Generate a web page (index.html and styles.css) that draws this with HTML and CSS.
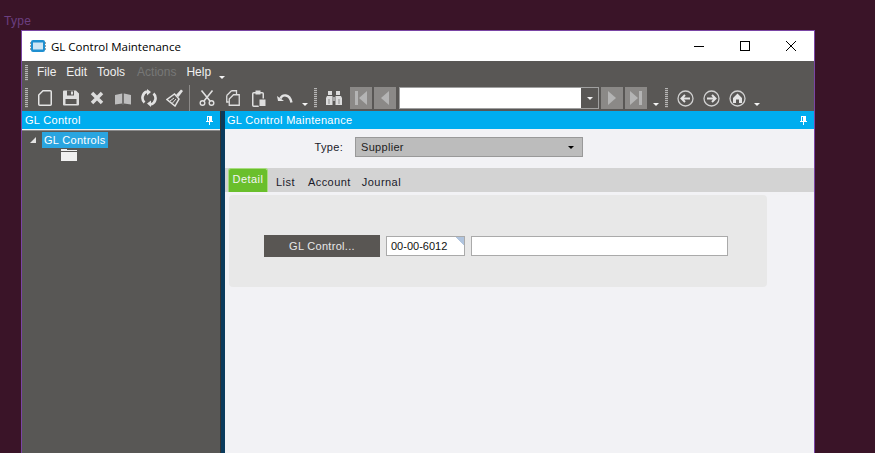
FILE: index.html
```html
<!DOCTYPE html>
<html lang="en">
<head>
<meta charset="utf-8">
<title>GL Control Maintenance</title>
<link rel="stylesheet" href="styles.css">
</head>
<body>
<div class="desk-label">Type</div>
<div class="window">
  <header class="titlebar">
    <svg class="app-icon" width="16" height="14" viewBox="0 0 16 14"><rect x="1" y="1" width="14" height="12" rx="2" fill="#1f8fd0"/><rect x="3" y="3.500" width="10" height="7" fill="#cfe6f5"/><path d="M0 4h1M0 7h1M0 10h1M15 4h1M15 7h1M15 10h1" stroke="#444"/></svg>
    <span class="title">GL Control Maintenance</span>
    <div class="win-controls">
      <svg class="win-btn" width="12" height="12" viewBox="0 0 12 12"><path d="M1 6.500h10" stroke="#000"/></svg>
      <svg class="win-btn" width="12" height="12" viewBox="0 0 12 12"><rect x="1.500" y="1.500" width="9" height="9" fill="none" stroke="#000"/></svg>
      <svg class="win-btn" width="12" height="12" viewBox="0 0 12 12"><path d="M1 1l10 10M11 1L1 11" stroke="#000"/></svg>
    </div>
  </header>
  <nav class="menubar">
    <span class="grip grip-menu"></span>
    <span class="menu m-file">File</span>
    <span class="menu m-edit">Edit</span>
    <span class="menu m-tools">Tools</span>
    <span class="menu m-actions">Actions</span>
    <span class="menu m-help">Help</span>
    <span class="drop"></span>
  </nav>
  <div class="toolbar">
    <span class="grip grip-tool"></span>
    <span class="slot"><svg width="14" height="16" viewBox="0 0 14 16"><path d="M5 0.750h7.250a1 1 0 0 1 1 1v12.500a1 1 0 0 1-1 1H1.750a1 1 0 0 1-1-1V5z" fill="none" stroke="#e4e4e4" stroke-width="1.500"/></svg></span>
    <span class="slot"><svg width="16" height="16" viewBox="0 0 16 16"><path d="M0 1.500a1 1 0 0 1 1-1h12l3 3v11a1 1 0 0 1-1 1H1a1 1 0 0 1-1-1z" fill="#dedede"/><rect x="4" y="0.500" width="7" height="5" fill="#595755"/><rect x="8" y="1.500" width="2" height="3" fill="#dedede"/><rect x="2.500" y="9" width="11" height="5" fill="#595755"/></svg></span>
    <span class="slot"><svg width="14" height="14" viewBox="0 0 14 14"><path d="M2 2l10 10M12 2L2 12" stroke="#dcdcdc" stroke-width="3.500"/></svg></span>
    <span class="slot"><svg width="16" height="13" viewBox="0 0 16 13"><path d="M0 3l7-1.500v10L0 12.500zM16 3l-7-1.500v10l7 1z" fill="#bdbdbd"/><path d="M7.500 1.500h1v11h-1z" fill="#8a8a8a"/></svg></span>
    <span class="slot"><svg width="16" height="18" viewBox="0 0 16 18"><path d="M3.500 13.500A6.500 6.500 0 0 1 6 2.600M12.500 4.500A6.500 6.500 0 0 1 10 15.400" fill="none" stroke="#e2e2e2" stroke-width="2.600"/><path d="M6 0v6.500L10 3zM10 11.500V18l-4-3.500z" fill="#e2e2e2"/></svg></span>
    <span class="slot"><svg width="18" height="18" viewBox="0 0 18 18"><path d="M10 6l5-5.500 2 1.500-4.500 6" fill="#e2e2e2"/><path d="M8.500 5L13 10 9 17 1 10.500z" fill="none" stroke="#e2e2e2" stroke-width="1.500"/><path d="M4 12l4-3M6.500 14l3.500-4" stroke="#e2e2e2"/></svg></span>
    <span class="sep"></span>
    <span class="slot"><svg width="16" height="16" viewBox="0 0 16 16"><path d="M2.500 0.500L11 11M13.500 0.500L5 11" stroke="#e0e0e0" stroke-width="1.600"/><circle cx="3.500" cy="13" r="2.300" fill="none" stroke="#e0e0e0" stroke-width="1.400"/><circle cx="12.500" cy="13" r="2.300" fill="none" stroke="#e0e0e0" stroke-width="1.400"/></svg></span>
    <span class="slot"><svg width="14" height="16" viewBox="0 0 14 16"><path d="M5.500 0.750h5v3.500M0.750 5.500L5.500 0.750M0.750 5.500v6.500h2" fill="none" stroke="#dedede" stroke-width="1.300"/><path d="M7.500 4.750h5.750v10.500H3.250V9z" fill="#595755" stroke="#dedede" stroke-width="1.300"/></svg></span>
    <span class="slot"><svg width="14" height="17" viewBox="0 0 14 17"><rect x="0.750" y="2.750" width="10.500" height="13.500" rx="1" fill="none" stroke="#dedede" stroke-width="1.500"/><rect x="3.500" y="0.500" width="5" height="4" fill="#dedede"/><path d="M7 9h7v7.500H7z" fill="#dedede" stroke="#595755"/></svg></span>
    <span class="slot"><svg width="16" height="11" viewBox="0 0 16 11"><path d="M3.500 5.500C5 1.500 12.500 0 14.500 9.500" fill="none" stroke="#e2e2e2" stroke-width="2.400"/><path d="M0 3l7 5H1z" fill="#e2e2e2"/></svg></span>
    <span class="drop drop-tool"></span>
    <span class="grip grip-tool2"></span>
    <span class="slot"><svg width="16" height="14" viewBox="0 0 16 14"><path d="M1 5h5.500v9H0V7zM9.500 5H15l1 2v7H9.500z" fill="#dcdcdc"/><rect x="2" y="0" width="4" height="4" fill="#dcdcdc"/><rect x="10" y="0" width="4" height="4" fill="#dcdcdc"/><rect x="6.500" y="6" width="3" height="4" fill="#a8a8a8"/><path d="M3 8v5M13 8v5" stroke="#8c8c8c"/></svg></span>
    <div class="nav-group">
      <span class="nav-btn"><svg width="14" height="14" viewBox="0 0 14 14"><path d="M1 0h3v14H1zM13 0v14L5 7z" fill="#b4b4b4"/></svg></span>
      <span class="nav-btn"><svg width="14" height="14" viewBox="0 0 14 14"><path d="M11 0v14L3 7z" fill="#b4b4b4"/></svg></span>
    </div>
    <div class="combo"><span class="combo-field"></span><span class="combo-btn"><span class="drop-w"></span></span></div>
    <div class="nav-group">
      <span class="nav-btn"><svg width="14" height="14" viewBox="0 0 14 14"><path d="M3 0v14l8-7z" fill="#b4b4b4"/></svg></span>
      <span class="nav-btn"><svg width="14" height="14" viewBox="0 0 14 14"><path d="M1 0v14l8-7zM10 0h3v14h-3z" fill="#b4b4b4"/></svg></span>
    </div>
    <span class="drop drop-nav"></span>
    <span class="grip grip-tool3"></span>
    <span class="slot"><svg width="17" height="17" viewBox="0 0 17 17"><circle cx="8.500" cy="8.500" r="7.500" fill="none" stroke="#d0d0d0" stroke-width="1.300"/><path d="M13 8.500H5M8 5L4.500 8.500 8 12" fill="none" stroke="#e4e4e4" stroke-width="2"/></svg></span>
    <span class="slot"><svg width="17" height="17" viewBox="0 0 17 17"><circle cx="8.500" cy="8.500" r="7.500" fill="none" stroke="#d0d0d0" stroke-width="1.300"/><path d="M4 8.500h8M9 5l3.500 3.500L9 12" fill="none" stroke="#e4e4e4" stroke-width="2"/></svg></span>
    <span class="slot"><svg width="17" height="17" viewBox="0 0 17 17"><circle cx="8.500" cy="8.500" r="7.500" fill="none" stroke="#d0d0d0" stroke-width="1.300"/><path d="M8.500 3.500L13 8v5H10V9.500H7V13H4V8z" fill="#e4e4e4"/></svg></span>
    <span class="drop drop-end"></span>
  </div>
  <div class="panes">
    <aside class="left">
      <div class="pane-head"><span>GL Control</span><svg class="pin" width="7" height="9" viewBox="0 0 7 9"><path d="M1 0h5v5h1v1H4v3H3V6H0V5h1zM2 1v4h1V1z" fill="#fff" fill-rule="evenodd"/></svg></div>
      <div class="tree">
        <div class="tree-row">
          <svg class="twist" width="8" height="8" viewBox="0 0 8 8"><path d="M7 1v6H1z" fill="#e4e4e4"/></svg>
          <span class="tree-sel">GL Controls</span>
        </div>
        <svg class="folder" width="16" height="12" viewBox="0 0 16 12"><path d="M0 0h6v1h10v1H0zM0 3h16v9H0z" fill="#f0f0f0"/></svg>
      </div>
    </aside>
    <div class="splitter"></div>
    <main class="right">
      <div class="pane-head head-right"><span>GL Control Maintenance</span><svg class="pin" width="7" height="9" viewBox="0 0 7 9"><path d="M1 0h5v5h1v1H4v3H3V6H0V5h1zM2 1v4h1V1z" fill="#fff" fill-rule="evenodd"/></svg></div>
      <div class="type-row">
        <label class="type-label">Type:</label>
        <div class="select"><span>Supplier</span><span class="drop-k"></span></div>
      </div>
      <div class="tabs">
        <span class="tab active">Detail</span>
        <span class="tab t-list">List</span>
        <span class="tab t-account">Account</span>
        <span class="tab t-journal">Journal</span>
      </div>
      <section class="card">
        <button class="gl-btn">GL Control...</button>
        <div class="code"><span>00-00-6012</span></div>
        <div class="desc"></div>
      </section>
    </main>
  </div>
</div>
</body>
</html>
```

FILE: styles.css
```css
* { box-sizing: border-box; }
html, body { margin: 0; height: 453px; overflow: hidden; }
body {
  background: #3a1428;
  font-family: "Liberation Sans", Arial, sans-serif;
  font-size: 11px;
  letter-spacing: 0.3px;
  padding-left: 21px;
}
.desk-label {
  height: 30px;
  margin-left: -17px;
  padding-top: 14px;
  font-size: 12px;
  line-height: 14px;
  color: #6b3f80;
}
.window {
  width: 794px;
  height: 423px;
  border: 1px solid #7a45a5;
  border-bottom: 0;
  background: #595755;
  display: flex;
  flex-direction: column;
  overflow: hidden;
}
.titlebar {
  flex: 0 0 30px;
  background: #fff;
  display: flex;
  align-items: center;
  padding-left: 8px;
  letter-spacing: 0;
}
.app-icon { margin-right: 5px; }
.title { font-family: "Open Sans", sans-serif; font-size: 11.500px; color: #000; }
.win-controls { margin-left: auto; display: flex; gap: 34px; padding-right: 17px; }
.menubar {
  flex: 0 0 23px;
  display: flex;
  align-items: center;
  color: #f0f0f0;
  font-size: 12px;
  letter-spacing: 0;
  padding-left: 3px;
}
.menu { line-height: 23px; }
.m-file { margin-left: 9px; }
.m-edit { margin-left: 10px; }
.m-tools { margin-left: 10px; }
.m-actions { margin-left: 12px; color: #777; }
.m-help { margin-left: 10px; }
.menubar .drop { margin-left: 8px; margin-top: 9px; }
.grip {
  width: 3px;
  background: repeating-linear-gradient(#b5b5b5 0 1px, #6a6764 1px 2px);
}
.grip-menu { height: 16px; }
.toolbar {
  flex: 0 0 27px;
  display: flex;
  align-items: center;
  padding: 3px 0 2px 3px;
}
.grip-tool { height: 20px; margin-right: 4px; }
.grip-tool2 { height: 20px; margin: 0 4px 0 1px; }
.grip-tool3 { height: 20px; margin: 0 4px 0 5px; }
.slot {
  width: 26px;
  height: 22px;
  flex: none;
  display: flex;
  align-items: center;
  justify-content: center;
}
.sep { width: 1px; height: 22px; background: #8c8a88; margin: 0 4px 0 1px; flex: none; box-shadow: 0 -2px 0 #8c8a88, 0 2px 0 #8c8a88; }
.drop {
  width: 0;
  height: 0;
  flex: none;
  border-left: 3px solid transparent;
  border-right: 3px solid transparent;
  border-top: 3px solid #f4f4f4;
}
.drop-tool { margin: 12px 5px 0 4px; }
.drop-nav { margin: 12px 1px 0 6px; }
.drop-end { margin: 12px 0 0 4px; }
.nav-group { display: flex; gap: 2px; margin-left: 3px; flex: none; }
.nav-btn {
  width: 22px;
  height: 22px;
  background: #8b8987;
  display: flex;
  align-items: center;
  justify-content: center;
}
.combo {
  width: 200px;
  height: 22px;
  margin-left: 3px;
  flex: none;
  border: 1px solid #a0a0a0;
  display: flex;
}
.combo-field { flex: 1; background: #fff; }
.combo-btn { width: 17px; background: #595755; display: flex; align-items: center; justify-content: center; }
.drop-w { border-left: 3px solid transparent; border-right: 3px solid transparent; border-top: 3px solid #f4f4f4; }
.combo + .nav-group { margin-left: 2px; }
.panes { flex: 1; display: flex; min-height: 0; }
.left { width: 198px; flex: none; background: #585755; }
.splitter { width: 5px; flex: none; background: #0b3b5c; border-left: 1px solid #333; }
.right { flex: 1; background: #f2f2f5; min-width: 0; }
.pane-head {
  height: 18px;
  background: #00adef;
  color: #fff;
  font-size: 11px;
  display: flex;
  align-items: center;
  justify-content: space-between;
  padding: 0 7px 0 3px;
}
.head-right { padding-left: 2px; }
.tree { border-top: 1px solid #f2f2f2; padding-top: 2px; box-shadow: inset 0 1px 0 #8a8a8a; }
.tree-row { display: flex; align-items: center; height: 16px; padding-left: 7px; }
.twist { margin-right: 5px; }
.tree-sel { background: #2aa5e0; color: #fff; line-height: 16px; padding: 0 2px; font-size: 11px; }
.folder { display: block; margin: 1px 0 0 39px; }
.type-row { height: 39px; display: flex; align-items: center; padding-bottom: 3px; }
.type-label { width: 130px; text-align: right; padding-right: 12px; color: #1a1a2a; font-size: 11px; }
.select {
  width: 228px;
  height: 20px;
  background: #bcbcbc;
  border: 1px solid #999;
  display: flex;
  align-items: center;
  justify-content: space-between;
  padding: 0 8px 0 5px;
  color: #222;
}
.drop-k { border-left: 3px solid transparent; border-right: 3px solid transparent; border-top: 3px solid #000; }
.tabs { height: 24px; background: #d3d3d3; display: flex; align-items: flex-end; padding-left: 3px; }
.tab { color: #1a1a2a; line-height: 20px; height: 20px; letter-spacing: 0.45px; }
.tab.active {
  width: 40px;
  height: 24px;
  line-height: 21px;
  text-align: center;
  background: #6abf2c;
  color: #f4f4f4;
  border: 1px solid #a8dc80;
  border-bottom: 0;
  border-radius: 3px 3px 0 0;
}
.t-list { margin-left: 8px; }
.t-account { margin-left: 13px; }
.t-journal { margin-left: 11px; }
.card {
  width: 538px;
  height: 92px;
  margin: 3px 0 0 4px;
  background: #e8e8e8;
  border-radius: 4px;
  display: flex;
  align-items: center;
  padding-left: 35px;
  padding-top: 10px;
}
.gl-btn {
  width: 116px;
  height: 22px;
  border: 0;
  background: #595653;
  color: #e8e8e8;
  font: 11px "Liberation Sans", Arial, sans-serif;
  letter-spacing: 0.3px;
  margin-right: 6px;
  padding: 0;
}
.code {
  width: 79px;
  height: 20px;
  background: linear-gradient(225deg, #b0c4de 0 6px, #fff 6px);
  border: 1px solid #aaa;
  line-height: 18px;
  padding-left: 4px;
  margin-right: 6px;
  color: #111;
  letter-spacing: 0;
}
.desc { width: 257px; height: 20px; background: #fff; border: 1px solid #aaa; }
```
